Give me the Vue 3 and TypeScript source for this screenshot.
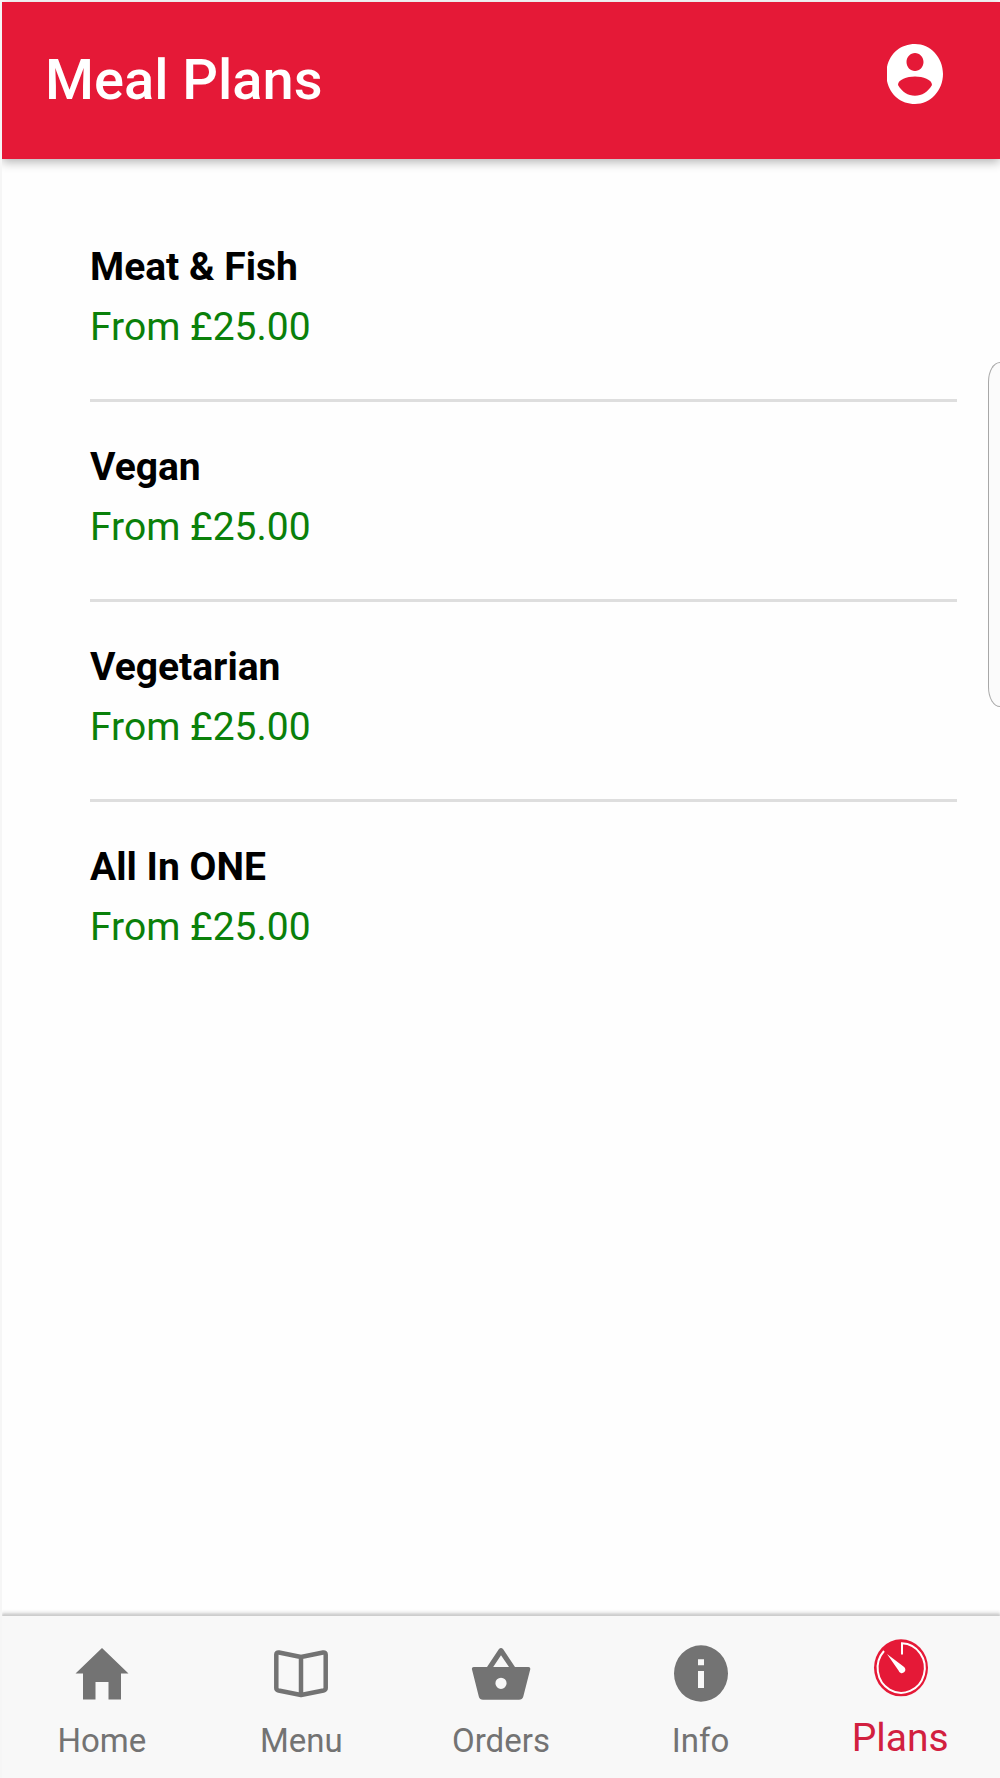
<script setup lang="ts">
interface Plan {
  name: string
  price: string
}

type TabId = 'home' | 'menu' | 'orders' | 'info' | 'plans'

interface Tab {
  id: TabId
  label: string
}

const plans: Plan[] = [
  { name: 'Meat & Fish', price: 'From £25.00' },
  { name: 'Vegan', price: 'From £25.00' },
  { name: 'Vegetarian', price: 'From £25.00' },
  { name: 'All In ONE', price: 'From £25.00' },
]

const tabs: Tab[] = [
  { id: 'home', label: 'Home' },
  { id: 'menu', label: 'Menu' },
  { id: 'orders', label: 'Orders' },
  { id: 'info', label: 'Info' },
  { id: 'plans', label: 'Plans' },
]

const activeTab: TabId = 'plans'
</script>

<template>
  <div class="app">
    <header class="toolbar">
      <h1 class="title">Meal Plans</h1>
      <button class="account" type="button" aria-label="Account">
        <svg viewBox="0 0 58 62" aria-hidden="true">
          <path
            fill="#fff"
            fill-rule="evenodd"
            d="M1 24C4 10 15 1 29 1c15.500 0 28 13.400 28 30S44.500 61 29 61C15 61 4 52 1 38zM29 10c-4.700 0-8.500 4-8.500 9s3.800 9 8.500 9 8.500-4 8.500-9-3.800-9-8.500-9zM12 42C16 49 22 52.700 29 52.700s13-3.700 17-10.700c0-5.500-9-8.500-17-8.500s-17 3-17 8.500z"
          />
        </svg>
      </button>
    </header>

    <main class="content">
      <ul class="plans">
        <li v-for="plan in plans" :key="plan.name" class="plan">
          <h2 class="plan-name">{{ plan.name }}</h2>
          <p class="plan-price">{{ plan.price }}</p>
        </li>
      </ul>
    </main>

    <nav class="tabs">
      <a
        v-for="tab in tabs"
        :key="tab.id"
        href="#"
        class="tab"
        :class="{ active: tab.id === activeTab }"
      >
        <svg class="icon" viewBox="0 0 66 68" aria-hidden="true">
          <path
            v-if="tab.id === 'home'"
            fill="currentColor"
            d="M33 8 59.500 33.500H52v26H39.500V42h-13v17.500H14v-26H6.500z"
          />
          <path
            v-else-if="tab.id === 'menu'"
            fill="none"
            stroke="currentColor"
            stroke-width="4.500"
            stroke-linejoin="round"
            d="M33 17 11 12.500Q8.300 12 8.300 14.500V48Q8.300 50 10.500 50.500L33 55l22.500-4.500Q57.700 50 57.700 48V14.500Q57.700 12 55 12.500zV55"
          />
          <path
            v-else-if="tab.id === 'orders'"
            fill="currentColor"
            fill-rule="evenodd"
            d="M19 27 30.800 9.200Q33 6.600 35.200 9.200L47 27H60.500Q62.800 27.200 62.200 29.500L55.300 56.500Q54.300 59.700 51 59.700H15Q11.700 59.700 10.800 56.500L4 29.500Q3.400 27.200 5.700 27zM25.200 27H41L33 15.300zM33 37.700a5.600 5.600 0 1 0 0 11.200 5.600 5.600 0 0 0 0-11.200z"
          />
          <path
            v-else-if="tab.id === 'info'"
            fill="currentColor"
            fill-rule="evenodd"
            d="M33 5.300a27 28.200 0 1 0 0 56.400 27 28.200 0 0 0 0-56.400zM30 19.300h6v6h-6zM30 31h6v17h-6z"
          />
          <g v-else>
            <ellipse cx="34" cy="33.800" rx="27" ry="28.500" fill="#e51937" />
            <path
              d="M35 20.500V9.200A23.600 24.800 0 1 1 17 17"
              fill="none"
              stroke="#fff"
              stroke-width="2"
            />
            <path
              d="M20 20 36.500 32.500A3.500 3.500 0 1 1 31.500 36.500z"
              fill="#fff"
            />
          </g>
        </svg>
        <span class="label">{{ tab.label }}</span>
      </a>
    </nav>

    <aside class="edge-handle" aria-hidden="true"></aside>
  </div>
</template>

<style>
body {
  margin: 0;
  background: #fff;
}
</style>

<style scoped>
.app {
  position: relative;
  box-sizing: border-box;
  display: flex;
  flex-direction: column;
  min-height: 100vh;
  padding-top: 2px;
  border-left: 2px solid #f6f6f6;
  overflow: hidden;
  background: #fefefe;
  color: #000;
  font-family: Roboto, "Liberation Sans", sans-serif;
}

.toolbar {
  display: flex;
  align-items: center;
  justify-content: space-between;
  height: 157px;
  padding: 0 56px 2px 43px;
  box-sizing: border-box;
  background: #e51937;
  box-shadow: 0 3px 10px rgba(0, 0, 0, 0.3);
}

.title {
  margin: 0;
  color: #fff;
  font-size: 56px;
  font-weight: 500;
  line-height: 68px;
}

.account {
  display: flex;
  padding: 0 0 12px;
  border: 0;
  background: none;
}

.account svg {
  width: 58px;
  height: 62px;
}

.content {
  flex: 1;
  padding: 43px 43px 0 88px;
}

.plans {
  margin: 0;
  padding: 0;
  list-style: none;
}

.plan {
  padding: 35px 0 42px;
  border-bottom: 3px solid #dedede;
}

.plan:last-child {
  border-bottom: 0;
}

.plan-name,
.plan-price {
  margin: 0;
  font-size: 39px;
  line-height: 60px;
}

.plan-name {
  font-weight: 700;
}

.plan-price {
  color: #0a800a;
  font-weight: 400;
}

.tabs {
  display: flex;
  height: 162px;
  box-sizing: border-box;
  background: #f8f8f8;
  box-shadow: 0 -2px 2px #cbcbcb, 0 -4px 3px #e4e4e4;
}

.tab {
  flex: 1;
  display: flex;
  flex-direction: column;
  align-items: center;
  justify-content: flex-end;
  gap: 12px;
  padding-bottom: 16px;
  color: #737373;
  font-size: 33px;
  line-height: 42px;
  text-decoration: none;
}

.tab.active {
  color: #d2203f;
  font-size: 39px;
  line-height: 48px;
}

.icon {
  width: 66px;
  height: 68px;
}

.edge-handle {
  position: absolute;
  top: 362px;
  right: 0;
  width: 12px;
  height: 345px;
  box-sizing: border-box;
  border: 1px solid #a8a8a8;
  border-right: 0;
  border-radius: 12px 0 0 12px / 20px 0 0 20px;
  background: #fbfbfb;
}
</style>
